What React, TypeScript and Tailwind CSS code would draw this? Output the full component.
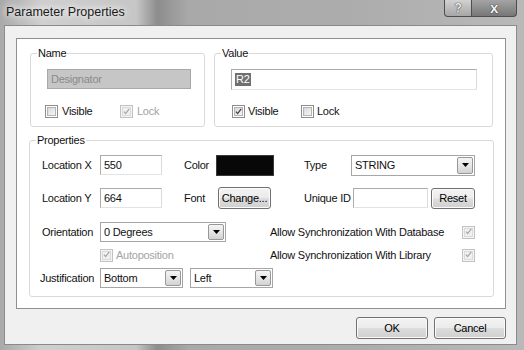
import * as React from "react";

function Check({ checked = false, disabled = false }: { checked?: boolean; disabled?: boolean }) {
  return (
    <span
      className={`flex h-[13px] w-[13px] shrink-0 items-center justify-center border ${
        disabled ? "border-[#c2c2c2] bg-[#f4f4f4]" : "border-[#8e8e8e] bg-white"
      }`}
    >
      <span
        className={`flex h-[9px] w-[9px] items-center justify-center border ${
          disabled
            ? "border-[#dadada] bg-[#f0f0f0]"
            : "border-[#b4b4b4] bg-[linear-gradient(135deg,#d8d8d8,#f7f7f7)]"
        }`}
      >
        {checked && (
          <svg width="9" height="9" viewBox="0 0 9 9" className="-mt-[1px]">
            <path
              d="M1.2 4.6 L3.4 7.2 L8 1"
              fill="none"
              stroke={disabled ? "#a8a8a8" : "#404040"}
              strokeWidth="1.6"
            />
          </svg>
        )}
      </span>
    </span>
  );
}

function TextBox({ className = "", children }: { className?: string; children?: React.ReactNode }) {
  return (
    <div
      className={`flex items-center border border-[#ababab] border-b-[#e3e3e3] border-r-[#dbdbdb] bg-white pl-[3px] ${className}`}
    >
      {children}
    </div>
  );
}

function Select({ text, className = "" }: { text: string; className?: string }) {
  return (
    <div className={`flex border border-[#a6a6a6] bg-white ${className}`}>
      <span className="flex flex-1 items-center pl-[3px]">{text}</span>
      <span className="m-[1px] flex w-[16px] items-center justify-center rounded-[2px] border border-[#989898] bg-[linear-gradient(#f4f4f4_0%,#e6e6e6_50%,#d2d2d2_100%)]">
        <svg width="7" height="4" viewBox="0 0 7 4">
          <path d="M0 0 H7 L3.5 4 Z" fill="#000" />
        </svg>
      </span>
    </div>
  );
}

function Button({ label, className = "" }: { label: string; className?: string }) {
  return (
    <button
      type="button"
      className={`flex items-center justify-center rounded-[3px] border border-[#707070] bg-[linear-gradient(#f3f3f3_0%,#ebebeb_48%,#dddddd_52%,#cfcfcf_100%)] text-[11px] text-black shadow-[inset_0_0_0_1px_#fbfbfb] ${className}`}
    >
      {label}
    </button>
  );
}

function GroupBox({
  label,
  className = "",
  children,
}: {
  label: string;
  className?: string;
  children?: React.ReactNode;
}) {
  return (
    <div className={`relative rounded-[3px] border border-[#d9d9d9] ${className}`}>
      <span className="absolute -top-[8px] left-[6px] bg-white px-[1px] leading-[14px]">{label}</span>
      {children}
    </div>
  );
}

export default function App() {
  return (
    <div className="flex h-[350px] w-[524px] flex-col overflow-hidden bg-[linear-gradient(to_right,#a9a9a9_0%,#cfcfcf_8%,#c6c6c6_26%,#8d8d8d_30%,#a9a9a9_36%,#adadad_70%,#b9b9b9_100%)] font-['Liberation_Sans',Arial,sans-serif] text-[11px] tracking-[-0.25px] text-[#111]">
      {/* Title bar */}
      <div className="flex h-[25px] shrink-0 items-start justify-between pl-[6px] pr-[7px]">
        <span className="mt-[4px] text-[12.5px] leading-[16px] tracking-normal text-[#1a1a1a] [text-shadow:0_0_6px_#ffffff,0_0_10px_#ffffff]">
          Parameter Properties
        </span>
        <div className="flex h-[17px]">
          <span className="flex w-[28px] items-center justify-center rounded-bl-[4px] border border-t-0 border-[#4e4e4e] bg-[linear-gradient(#d2d2d2,#a6a6a6)] text-[12px] font-bold leading-none text-[#ececec] [text-shadow:0_0_1px_#333,0_0_1px_#333]">
            ?
          </span>
          <span className="flex w-[45px] items-center justify-center rounded-br-[4px] border border-l-0 border-t-0 border-[#4e4e4e] bg-[linear-gradient(#a4a4a4,#777777)] pb-[2px] text-[15px] font-bold leading-none text-[#f4f4f4] [text-shadow:0_0_1px_#222,0_0_1px_#222]">
            x
          </span>
        </div>
      </div>

      {/* Client area */}
      <div className="ml-[4px] mr-[7px] flex h-[320px] flex-col border border-[#8a8a8a] bg-[#f0f0f0]">
        <div className="ml-[11px] mr-[10px] mt-[12px] flex h-[271px] flex-col border border-[#8f8f8f] bg-white">
          {/* Name / Value */}
          <div className="ml-[13px] mt-[14px] flex gap-[9px]">
            <GroupBox label="Name" className="h-[74px] w-[175px]">
              <div className="pl-[16px] pt-[15px]">
                <div className="flex h-[20px] w-[144px] items-center border border-[#a9a9a9] bg-[#c6c6c6] pl-[3px] text-[#8a8a8a]">
                  Designator
                </div>
              </div>
              <div className="mt-[16px] flex h-[13px] items-center pl-[14px]">
                <div className="flex w-[75px] items-center gap-[4px]">
                  <Check />
                  <span>Visible</span>
                </div>
                <div className="flex items-center gap-[4px] text-[#a3a3a3]">
                  <Check checked disabled />
                  <span>Lock</span>
                </div>
              </div>
            </GroupBox>
            <GroupBox label="Value" className="h-[74px] w-[279px]">
              <div className="pl-[16px] pt-[15px]">
                <TextBox className="h-[21px] w-[246px]">
                  <span className="bg-[#6f6f6f] px-[1px] leading-[13px] text-white">R2</span>
                </TextBox>
              </div>
              <div className="mt-[15px] flex h-[13px] items-center pl-[17px]">
                <div className="flex w-[69px] items-center gap-[3px]">
                  <Check checked />
                  <span>Visible</span>
                </div>
                <div className="flex items-center gap-[3px]">
                  <Check />
                  <span>Lock</span>
                </div>
              </div>
            </GroupBox>
          </div>

          {/* Properties */}
          <GroupBox label="Properties" className="ml-[12px] mt-[13px] h-[157px] w-[465px]">
            <div className="flex flex-col pl-[12px] pt-[13px]">
              <div className="flex h-[22px] items-center">
                <span className="w-[58px]">Location X</span>
                <TextBox className="h-[20px] w-[62px]">550</TextBox>
                <span className="ml-[22px] w-[32px]">Color</span>
                <div className="h-[21px] w-[58px] border border-[#3a3a3a] bg-[#080808]" />
                <span className="ml-[30px] w-[47px]">Type</span>
                <Select text="STRING" className="h-[21px] w-[124px]" />
              </div>
              <div className="mt-[11px] flex h-[22px] items-center">
                <span className="w-[58px]">Location Y</span>
                <TextBox className="h-[20px] w-[62px]">664</TextBox>
                <span className="ml-[22px] w-[34px]">Font</span>
                <Button label="Change..." className="h-[22px] w-[53px]" />
                <span className="ml-[33px] w-[49px] whitespace-nowrap">Unique ID</span>
                <TextBox className="h-[20px] w-[75px]" />
                <Button label="Reset" className="ml-[3px] h-[21px] w-[44px]" />
              </div>
              <div className="mt-[13px] flex h-[20px] items-center">
                <span className="w-[58px]">Orientation</span>
                <Select text="0 Degrees" className="h-[20px] w-[126px]" />
                <span className="ml-[44px] w-[192px] whitespace-nowrap">Allow Synchronization With Database</span>
                <Check checked disabled />
              </div>
              <div className="mt-[3px] flex h-[20px] items-center">
                <div className="ml-[58px] flex w-[126px] items-center gap-[3px] text-[#a3a3a3]">
                  <Check checked disabled />
                  <span>Autoposition</span>
                </div>
                <span className="ml-[44px] w-[192px] whitespace-nowrap">Allow Synchronization With Library</span>
                <Check checked disabled />
              </div>
              <div className="mt-[3px] flex h-[20px] items-center">
                <span className="-ml-[2px] w-[60px]">Justification</span>
                <Select text="Bottom" className="h-[20px] w-[83px]" />
                <Select text="Left" className="ml-[7px] h-[20px] w-[83px]" />
              </div>
            </div>
          </GroupBox>
        </div>

        {/* Dialog buttons */}
        <div className="mr-[10px] mt-[8px] flex justify-end gap-[6px]">
          <Button label="OK" className="h-[22px] w-[72px]" />
          <Button label="Cancel" className="h-[22px] w-[72px]" />
        </div>
      </div>
    </div>
  );
}
